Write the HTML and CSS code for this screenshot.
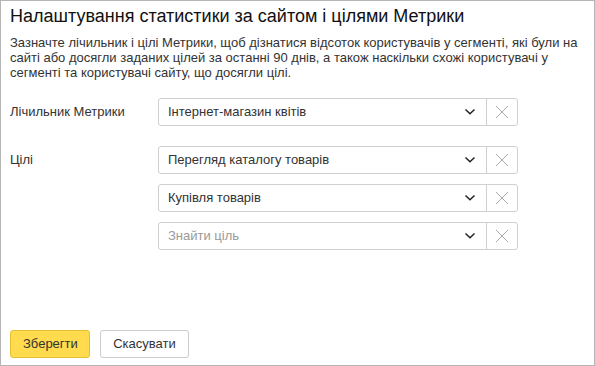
FILE: index.html
```html
<!DOCTYPE html>
<html lang="uk">
<head>
    <meta charset="UTF-8">
    <title>Налаштування статистики</title>
    <link rel="stylesheet" href="styles.css">
</head>
<body>
    <div class="dialog">
        <h2 class="title">Налаштування статистики за сайтом і цілями Метрики</h2>
        <p class="hint">Зазначте лічильник і цілі Метрики, щоб дізнатися відсоток користувачів у сегменті, які були на сайті або досягли заданих цілей за останні 90 днів, а також наскільки схожі користувачі у сегменті та користувачі сайту, що досягли цілі.</p>

        <div class="row counter-row">
            <div class="label">Лічильник Метрики</div>
            <div class="fields">
                <div class="select">
                    <div class="select-main">
                        <span class="value">Інтернет-магазин квітів</span>
                        <svg class="chevron" width="12" height="8" viewBox="0 0 12 8"><path d="M1.5 1.5 L6 5.8 L10.5 1.5" fill="none" stroke="#222" stroke-width="1.5"/></svg>
                    </div>
                    <div class="select-clear"><svg width="14" height="14" viewBox="0 0 14 14"><path d="M1 1 L13 13 M13 1 L1 13" stroke="#aaa" stroke-width="1"/></svg></div>
                </div>
            </div>
        </div>

        <div class="row">
            <div class="label">Цілі</div>
            <div class="fields">
                <div class="select">
                    <div class="select-main">
                        <span class="value">Перегляд каталогу товарів</span>
                        <svg class="chevron" width="12" height="8" viewBox="0 0 12 8"><path d="M1.5 1.5 L6 5.8 L10.5 1.5" fill="none" stroke="#222" stroke-width="1.5"/></svg>
                    </div>
                    <div class="select-clear"><svg width="14" height="14" viewBox="0 0 14 14"><path d="M1 1 L13 13 M13 1 L1 13" stroke="#aaa" stroke-width="1"/></svg></div>
                </div>
                <div class="select">
                    <div class="select-main">
                        <span class="value">Купівля товарів</span>
                        <svg class="chevron" width="12" height="8" viewBox="0 0 12 8"><path d="M1.5 1.5 L6 5.8 L10.5 1.5" fill="none" stroke="#222" stroke-width="1.5"/></svg>
                    </div>
                    <div class="select-clear"><svg width="14" height="14" viewBox="0 0 14 14"><path d="M1 1 L13 13 M13 1 L1 13" stroke="#aaa" stroke-width="1"/></svg></div>
                </div>
                <div class="select">
                    <div class="select-main">
                        <span class="value placeholder">Знайти ціль</span>
                        <svg class="chevron" width="12" height="8" viewBox="0 0 12 8"><path d="M1.5 1.5 L6 5.8 L10.5 1.5" fill="none" stroke="#222" stroke-width="1.5"/></svg>
                    </div>
                    <div class="select-clear"><svg width="14" height="14" viewBox="0 0 14 14"><path d="M1 1 L13 13 M13 1 L1 13" stroke="#aaa" stroke-width="1"/></svg></div>
                </div>
            </div>
        </div>

        <div class="actions">
            <button class="btn btn-save">Зберегти</button>
            <button class="btn btn-cancel">Скасувати</button>
        </div>
    </div>
</body>
</html>
```

FILE: styles.css
```css
body { margin: 0; font-family: "Liberation Sans", Arial, sans-serif; color: #222; background: #fff; }
.dialog { box-sizing: border-box; width: 595px; height: 366px; border: 1px solid #b5b5b5; padding: 4px 9px 7px 9px; display: flex; flex-direction: column; }
.title { margin: 0; font-size: 18px; font-weight: normal; line-height: 22px; color: #111; }
.hint { margin: 8px 0 0 0; font-size: 13px; line-height: 15px; color: #333; }
.row { display: flex; margin-top: 20px; }
.counter-row { margin-top: 18px; }
.label { width: 148px; font-size: 13px; line-height: 28px; color: #333; }
.fields { display: flex; flex-direction: column; gap: 10px; }
.select { display: flex; width: 360px; height: 28px; box-sizing: border-box; border: 1px solid #d0d0d0; border-radius: 3px; }
.select-main { flex: 1; display: flex; justify-content: space-between; padding: 0 10px 0 9px; }
.value { font-size: 13px; line-height: 26px; font-weight: 400; color: #333; }
.chevron { margin-top: 9px; }
.placeholder { color: #999; }
.select-clear { width: 30px; border-left: 1px solid #d0d0d0; display: flex; align-items: center; justify-content: center; }
.actions { margin-top: auto; display: flex; gap: 10px; }
.btn { height: 28px; padding: 0 12px; font-family: inherit; font-size: 13px; font-weight: 400; line-height: 26px; border-radius: 3px; color: #333; }
.btn-save { width: 80px; background: #ffdb4d; border: 1px solid #e5bf32; }
.btn-cancel { width: 89px; background: #fff; border: 1px solid #ccc; }
```
